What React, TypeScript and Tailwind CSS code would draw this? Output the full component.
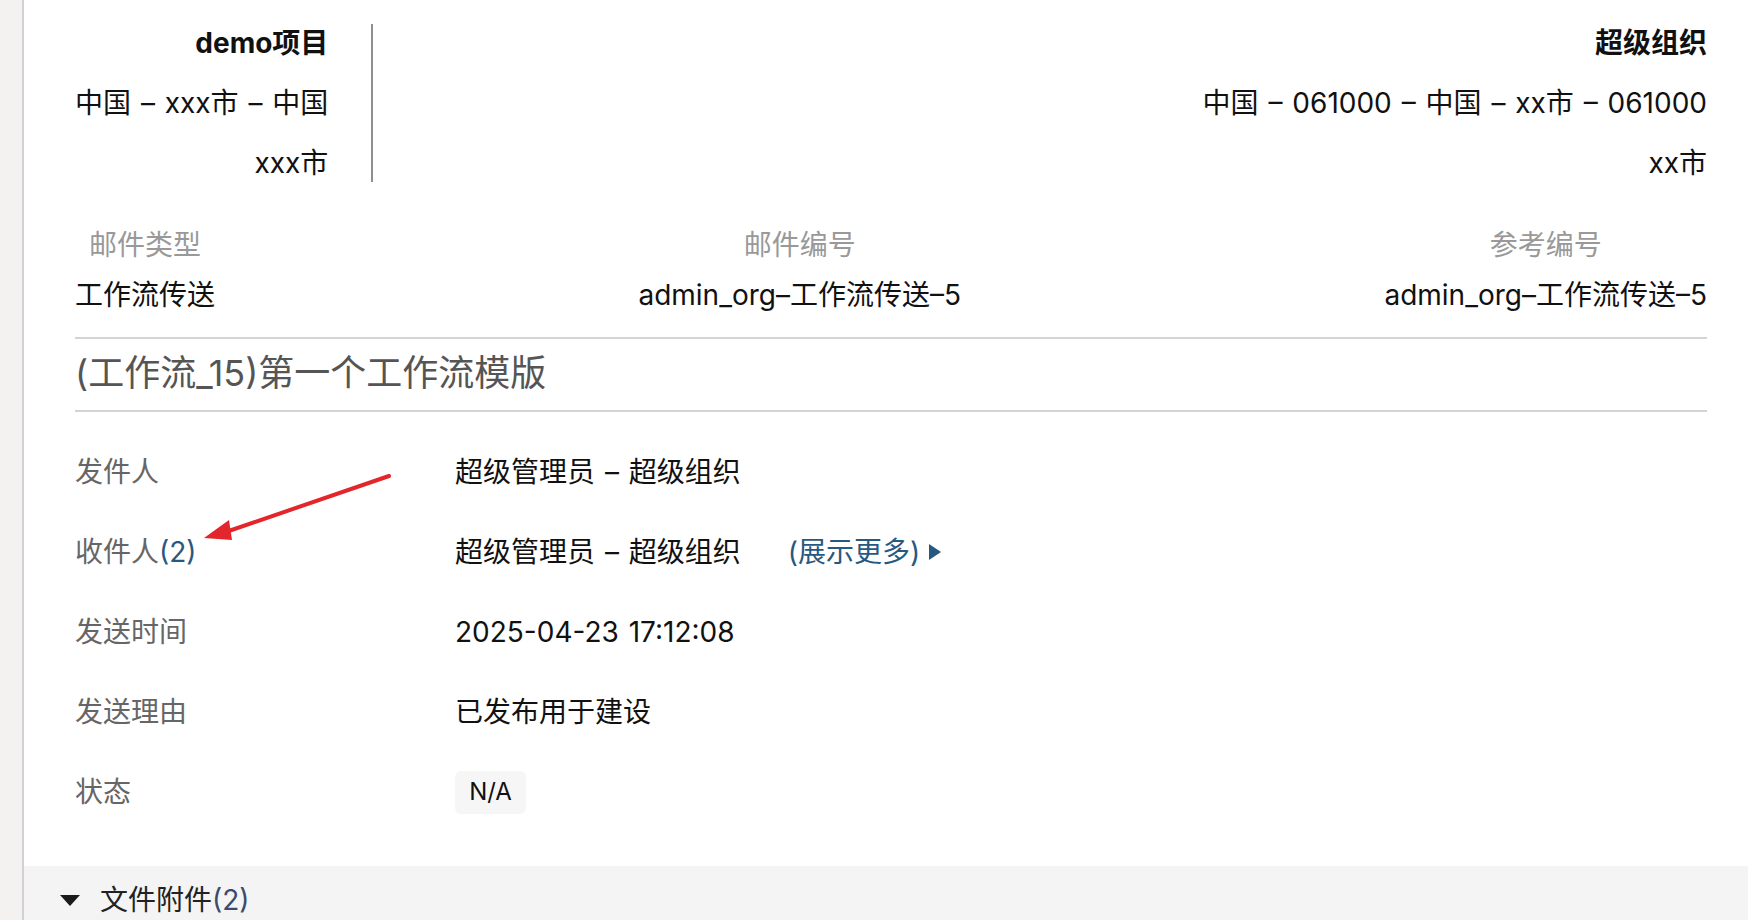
import React from "react";

const font = { fontFamily: 'Inter, "Noto Sans CJK SC", sans-serif' };

function Divider() {
  return <div className="h-[2px] w-full bg-[#d4d4d8]" />;
}

interface InfoRowProps {
  label: React.ReactNode;
  children: React.ReactNode;
}

function InfoRow({ label, children }: InfoRowProps) {
  return (
    <div className="flex h-[80px] items-center">
      <div className="w-[380px] shrink-0 text-[#666]">{label}</div>
      <div className="flex items-center text-[#111]">{children}</div>
    </div>
  );
}

function MetaCol({ label, value }: { label: string; value: string }) {
  return (
    <div className="text-center">
      <div className="mt-[32px] leading-[40px] text-[#999]">{label}</div>
      <div className="mt-[10px] leading-[40px] text-[#111]">{value}</div>
    </div>
  );
}

export default function App() {
  return (
    <div className="flex h-[920px] overflow-hidden bg-white text-[28px] [word-spacing:2px]" style={font}>
      <div className="w-[22px] shrink-0 bg-[#f3f2f0]" />
      <div className="w-[2px] shrink-0 bg-[#d1d1d6]" />

      <div className="relative flex flex-1 flex-col">
        <div className="pl-[51px] pr-[41px] pt-[13px]">
          {/* sender / receiver org */}
          <div className="flex leading-[60px] text-[#111]">
            <div className="text-right">
              <div className="font-bold">demo项目</div>
              <div>中国 – xxx市 – 中国</div>
              <div>xxx市</div>
            </div>
            <div className="my-[11px] ml-[43px] w-[2px] bg-[#8e8e93]" />
            <div className="flex-1 text-right">
              <div className="font-bold">超级组织</div>
              <div>中国 – 061000 – 中国 – xx市 – 061000</div>
              <div>xx市</div>
            </div>
          </div>

          <div className="flex justify-between">
            <MetaCol label="邮件类型" value="工作流传送" />
            <MetaCol label="邮件编号" value="admin_org–工作流传送–5" />
            <MetaCol label="参考编号" value="admin_org–工作流传送–5" />
          </div>

          <div className="mt-[22px]">
            <Divider />
          </div>
          <div className="mt-[13px] text-[36px] leading-[42px] text-[#555] [word-spacing:0px]">
            (工作流_15)第一个工作流模版
          </div>
          <div className="mt-[16px]">
            <Divider />
          </div>

          <div className="mt-[20px]">
            <InfoRow label="发件人">超级管理员 – 超级组织</InfoRow>
            <InfoRow
              label={
                <>
                  收件人<span className="text-[#27587f]">(2)</span>
                </>
              }
            >
              <span>超级管理员 – 超级组织</span>
              <span className="ml-[47px] text-[#27587f]">(展示更多)</span>
              <svg className="ml-[9px]" width="12" height="16" viewBox="0 0 12 16">
                <polygon points="0,0 12,8 0,16" fill="#27587f" />
              </svg>
            </InfoRow>
            <InfoRow label="发送时间">2025-04-23 17:12:08</InfoRow>
            <InfoRow label="发送理由">已发布用于建设</InfoRow>
            <InfoRow label="状态">
              <span className="flex h-[43px] w-[71px] items-center justify-center rounded-[6px] bg-[#f6f6f6] text-[24px]">
                N/A
              </span>
            </InfoRow>
          </div>
        </div>

        <div className="mt-[34px] flex-1 bg-[#f4f4f4] pt-[14px]">
          <div className="flex items-center leading-[40px] text-[#222]">
            <svg className="ml-[36px]" width="20" height="11" viewBox="0 0 20 11">
              <polygon points="0,0 20,0 10,11" fill="#1a1a1a" />
            </svg>
            <span className="ml-[20px]">
              文件附件<span className="text-[#3d4a6b]">(2)</span>
            </span>
          </div>
        </div>

        {/* annotation arrow */}
        <svg className="pointer-events-none absolute left-0 top-0" width="420" height="560">
          <line x1="365" y1="476" x2="196" y2="534" stroke="#e3262b" strokeWidth="4" strokeLinecap="round" />
          <polygon points="180,538 205,520 208,540" fill="#e3262b" />
        </svg>
      </div>
    </div>
  );
}
